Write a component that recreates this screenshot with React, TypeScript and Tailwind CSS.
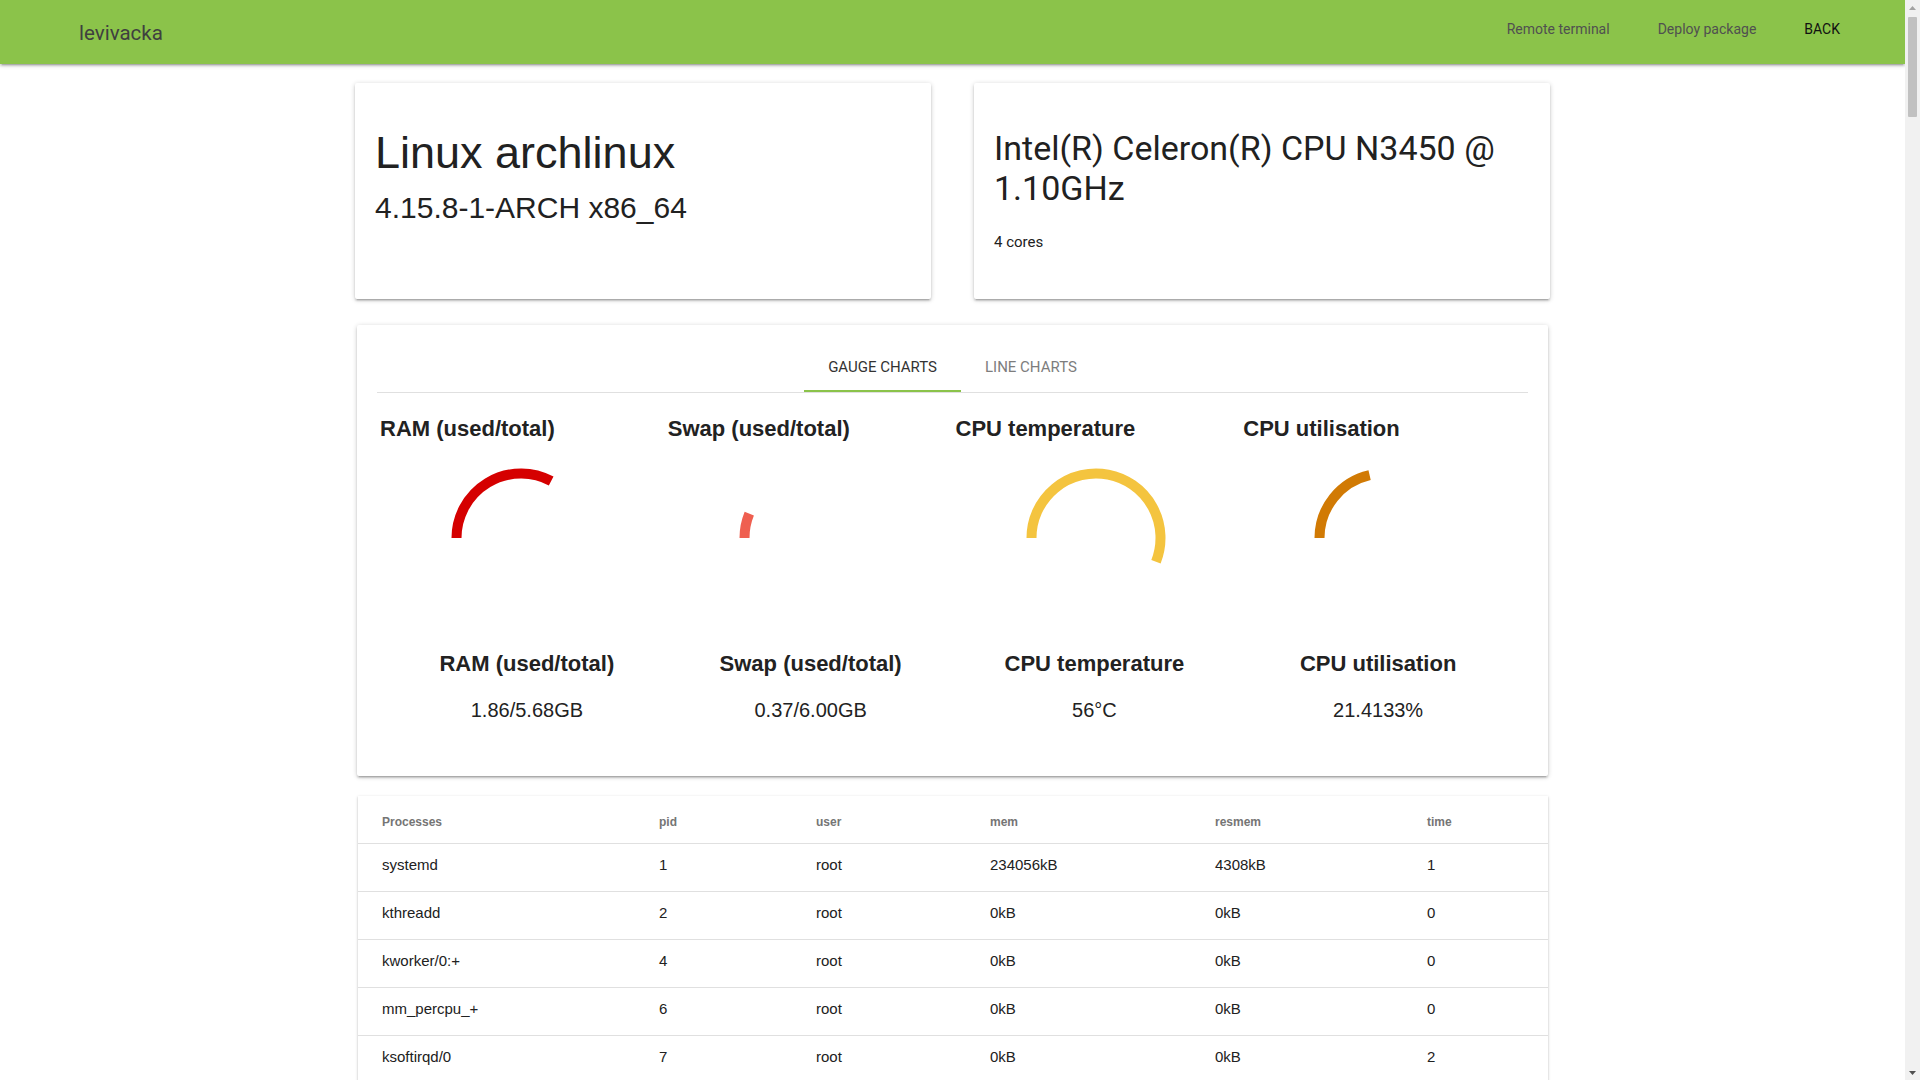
import React from 'react'

type Proc = { name: string; pid: number; user: string; mem: string; resmem: string; time: number }

const baseProcs: Proc[] = [
  { name: 'systemd', pid: 1, user: 'root', mem: '234056kB', resmem: '4308kB', time: 1 },
  { name: 'kthreadd', pid: 2, user: 'root', mem: '0kB', resmem: '0kB', time: 0 },
  { name: 'kworker/0:+', pid: 4, user: 'root', mem: '0kB', resmem: '0kB', time: 0 },
  { name: 'mm_percpu_+', pid: 6, user: 'root', mem: '0kB', resmem: '0kB', time: 0 },
  { name: 'ksoftirqd/0', pid: 7, user: 'root', mem: '0kB', resmem: '0kB', time: 2 },
]

const kernelNames = [
  'rcu_sched', 'rcu_bh', 'migration/0', 'watchdog/0', 'cpuhp/0', 'cpuhp/1', 'watchdog/1', 'migration/1',
  'ksoftirqd/1', 'kworker/1:+', 'cpuhp/2', 'watchdog/2', 'migration/2', 'ksoftirqd/2', 'kworker/2:+',
  'cpuhp/3', 'watchdog/3', 'migration/3', 'ksoftirqd/3', 'kworker/3:+', 'kdevtmpfs', 'netns',
  'rcu_tasks_+', 'kauditd', 'khungtaskd', 'oom_reaper', 'writeback', 'kcompactd0', 'ksmd', 'khugepaged',
  'crypto', 'kintegrity+', 'kblockd', 'edac-poller', 'devfreq_wq', 'watchdogd', 'kswapd0', 'kthrotld',
  'acpi_therm+', 'ipv6_addrc+', 'kstrp', 'charger_ma+', 'scsi_eh_0', 'scsi_tmf_0', 'i915/signal+',
  'ext4-rsv-c+', 'jbd2/sda2-8', 'systemd-jo+', 'systemd-ud+', 'systemd-ti+', 'systemd-ne+', 'systemd-re+',
  'dbus-daemon', 'systemd-lo+', 'sshd', 'agetty', 'node', 'bash', 'sudo', 'htop',
]

const procs: Proc[] = [...baseProcs]
for (let i = 0; procs.length < 214; i++) {
  const name = i < kernelNames.length ? kernelNames[i] : `kworker/u8:${i - kernelNames.length}`
  const userland = i > 46 && i < kernelNames.length
  procs.push({
    name,
    pid: 8 + i * 2 - (i % 2),
    user: userland && i % 3 === 0 ? 'levi' : 'root',
    mem: userland ? `${12000 + i * 731}kB` : '0kB',
    resmem: userland ? `${1800 + i * 97}kB` : '0kB',
    time: i % 7 === 0 ? 1 : 0,
  })
}

const gauges = [
  { title: 'RAM (used/total)', value: '1.86/5.68GB', fraction: 1.86 / 5.68, color: '#d50000' },
  { title: 'Swap (used/total)', value: '0.37/6.00GB', fraction: 0.37 / 6.0, color: '#ef5f50' },
  { title: 'CPU temperature', value: '56°C', fraction: 0.56, color: '#f4c43f' },
  { title: 'CPU utilisation', value: '21.4133%', fraction: 0.214133, color: '#d17a04' },
]

const cardShadow =
  'shadow-[0_2px_2px_0_rgba(0,0,0,0.14),0_3px_1px_-2px_rgba(0,0,0,0.12),0_1px_5px_0_rgba(0,0,0,0.2)]'

function Gauge({ fraction, color }: { fraction: number; color: string }) {
  const cx = 75
  const cy = 75
  const r = 64.5
  const a = fraction * 2 * Math.PI
  const x = cx - r * Math.cos(a)
  const y = cy - r * Math.sin(a)
  const large = fraction > 0.5 ? 1 : 0
  return (
    <svg width="150" height="150" viewBox="0 0 150 150" className="block mx-auto">
      <path
        d={`M ${cx - r} ${cy} A ${r} ${r} 0 ${large} 1 ${x.toFixed(2)} ${y.toFixed(2)}`}
        fill="none"
        stroke={color}
        strokeWidth="10"
      />
    </svg>
  )
}

function Navbar() {
  return (
    <nav className={`h-16 bg-[#8bc34a] flex items-center justify-between font-['Roboto',sans-serif] ${cardShadow}`}>
      <a className="pl-[79px] mt-[1px] text-[20.5px] leading-[64px] text-[#3f3f3f]">levivacka</a>
      <ul className="flex gap-12 pr-[65px] mb-[6px] text-[14px] leading-[56px]">
        <li className="text-[#505050]">Remote terminal</li>
        <li className="text-[#505050]">Deploy package</li>
        <li className="text-[#111]">BACK</li>
      </ul>
    </nav>
  )
}

// page scrollbar as it shows in the screenshot
function Scrollbar() {
  return (
    <div className="sticky top-0 w-[15px] h-screen shrink-0 bg-[#f1f1f1] flex flex-col items-center">
      <div className="h-[15px] flex items-center justify-center">
        <svg width="7" height="4" viewBox="0 0 7 4"><path d="M3.5 0 L7 4 L0 4 Z" fill="#a3a3a3" /></svg>
      </div>
      <div className="w-[9px] h-[100px] mt-[2px] rounded-[1px] bg-[#c1c1c1]" />
      <div className="flex-1" />
      <div className="h-[15px] flex items-center justify-center">
        <svg width="7" height="4" viewBox="0 0 7 4"><path d="M0 0 L7 0 L3.5 4 Z" fill="#505050" /></svg>
      </div>
    </div>
  )
}

function ProcessTable() {
  const cols = 'grid grid-cols-[277px_157px_174px_225px_212px_1fr] pl-6 items-center'
  return (
    <div className="mt-5 ml-[3px] mr-[2px] bg-white font-['Liberation_Sans',Arial,sans-serif] shadow-[0_1px_3px_rgba(0,0,0,0.2),0_1px_1px_rgba(0,0,0,0.14),0_2px_1px_-1px_rgba(0,0,0,0.12)]">
      <div className={`${cols} h-12 pt-1 border-b border-[#e0e0e0] text-[12px] font-bold text-[#757575]`}>
        <span>Processes</span>
        <span>pid</span>
        <span>user</span>
        <span>mem</span>
        <span>resmem</span>
        <span>time</span>
      </div>
      {procs.map((p) => (
        <div key={p.pid} className={`${cols} h-12 pb-1 border-b border-[#e0e0e0] text-[15px] text-[#212121]`}>
          <span>{p.name}</span>
          <span>{p.pid}</span>
          <span>{p.user}</span>
          <span>{p.mem}</span>
          <span>{p.resmem}</span>
          <span>{p.time}</span>
        </div>
      ))}
    </div>
  )
}

export default function App() {
  return (
    <div className="flex items-start bg-white">
      <div className="w-[1905px] shrink-0 min-h-screen">
        <Navbar />
        <div className="w-[1195px] mx-auto pt-[19px]">
          <div className="flex justify-between">
            <div className={`w-[576px] h-[216px] bg-white rounded-[2px] px-5 pt-[43px] text-[#212121] font-['Liberation_Sans',Arial,sans-serif] ${cardShadow}`}>
              <h3 className="text-[45px] leading-[54px]">Linux archlinux</h3>
              <p className="mt-[10px] text-[30px] leading-[36px]">4.15.8-1-ARCH x86_64</p>
            </div>
            <div className={`w-[576px] h-[216px] bg-white rounded-[2px] px-5 pt-[45px] text-[#212121] font-['Roboto',sans-serif] ${cardShadow}`}>
              <h4 className="text-[34px] leading-[40px]">Intel(R) Celeron(R) CPU N3450 @ 1.10GHz</h4>
              <p className="mt-6 text-[15px] leading-[20px]">4 cores</p>
            </div>
          </div>

          <div className={`mt-[26px] mx-[2px] h-[451px] bg-white rounded-[2px] px-5 pt-5 ${cardShadow}`}>
            <div className="h-12 border-b border-[#e0e0e0] flex justify-center font-['Roboto',sans-serif] text-[15px] leading-[44px]">
              <div className="relative px-6 text-[#333]">
                GAUGE CHARTS
                <div className="absolute left-0 right-0 bottom-0 h-[2px] bg-[#8bc34a]" />
              </div>
              <div className="px-6 text-[#7d7d7d]">LINE CHARTS</div>
            </div>

            <div className="grid grid-cols-4 mt-[23px] font-['Liberation_Sans',Arial,sans-serif]">
              {gauges.map((g) => (
                <div key={g.title}>
                  <div className="pl-[3px] text-[22px] leading-[26px] font-bold text-[#222]">{g.title}</div>
                  <div className="mt-[21px]">
                    <Gauge fraction={g.fraction} color={g.color} />
                  </div>
                </div>
              ))}
            </div>

            <div className="grid grid-cols-4 px-2 mt-[38px] text-center font-['Liberation_Sans',Arial,sans-serif]">
              {gauges.map((g) => (
                <div key={g.title}>
                  <div className="text-[22px] leading-[26px] font-bold text-[#222]">{g.title}</div>
                  <div className="mt-[21px] text-[20px] leading-[24px] text-[#222]">{g.value}</div>
                </div>
              ))}
            </div>
          </div>

          <ProcessTable />
        </div>
      </div>
      <Scrollbar />
    </div>
  )
}
